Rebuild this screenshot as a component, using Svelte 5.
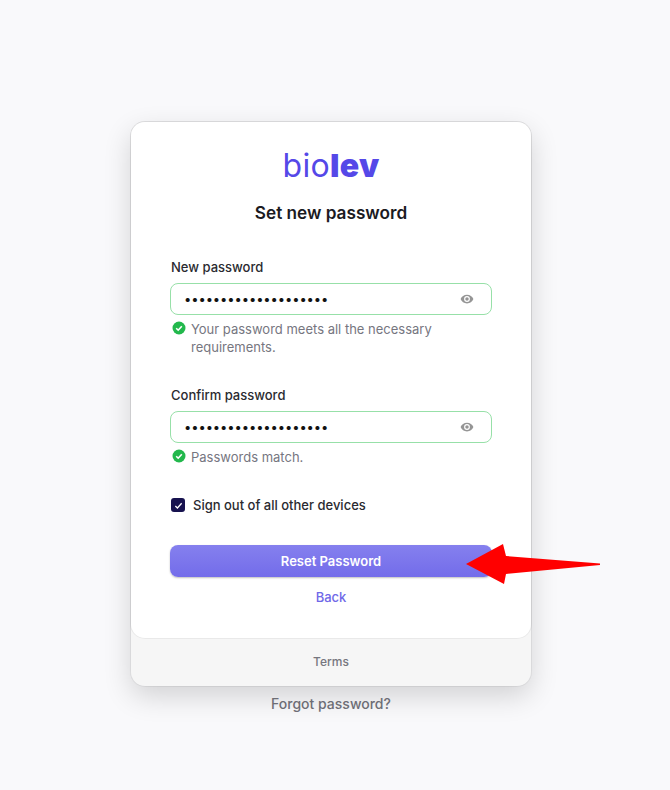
<script>
  const fields = [
    { label: 'New password', hint: 'Your password meets all the necessary requirements.' },
    { label: 'Confirm password', hint: 'Passwords match.' }
  ];
</script>

<div class="page">
  <div class="card">
    <div class="main">
      <div class="logo">bio<b>lev</b></div>
      <h1>Set new password</h1>

      {#each fields as field}
        <div class="field">
          <label for={field.label}>{field.label}</label>
          <div class="input-wrap">
            <input id={field.label} type="password" value="passwordpassword1234" readonly />
            <svg class="eye" width="14" height="14" viewBox="0 0 24 24" fill="#959595">
              <path d="M12 4.5C7 4.5 2.7 7.6 1 12c1.700 4.400 6 7.500 11 7.500s9.300-3.100 11-7.500c-1.700-4.400-6-7.500-11-7.500zM12 17a5 5 0 1 1 0-10 5 5 0 0 1 0 10zm0-8a3 3 0 1 0 0 6 3 3 0 0 0 0-6z" />
            </svg>
          </div>
          <div class="hint">
            <svg class="ok" width="14" height="14" viewBox="0 0 14 14">
              <circle cx="7" cy="7" r="6.500" fill="#22b84c" />
              <path d="M4.200 7.200l2 2 3.600-4" fill="none" stroke="#fff" stroke-width="1.600" />
            </svg>
            <span>{field.hint}</span>
          </div>
        </div>
      {/each}

      <div class="check">
        <span class="box">
          <svg width="9" height="9" viewBox="0 0 10 10">
            <path d="M1.500 5.500l2.300 2.300 4.700-5.300" fill="none" stroke="#fff" stroke-width="1.400" />
          </svg>
        </span>
        Sign out of all other devices
      </div>

      <button>Reset Password</button>
      <div class="back">Back</div>
    </div>
    <div class="footer">Terms</div>
  </div>
  <div class="forgot">Forgot password?</div>

  <svg class="arrow" width="140" height="44" viewBox="0 0 140 44">
    <path d="M1 22 L38 2 L41 14 L135 21.500 L135 23 L41 32 L39 42 Z" fill="#ff0000" />
  </svg>
</div>

<style>
  :global(body) {
    background: #f9f9fb;
    font-family: Inter, "Liberation Sans", sans-serif;
  }

  .page {
    position: relative;
    width: 670px;
    height: 790px;
    padding: 122px 8px 0 0;
    box-sizing: border-box;
    display: flex;
    flex-direction: column;
    align-items: center;
    overflow: hidden;
  }

  .card {
    width: 400px;
    background: #f6f6f6;
    border-radius: 14px;
    box-shadow: 0 0 0 1px rgba(0, 0, 0, 0.05), 0 10px 28px rgba(0, 0, 0, 0.16);
  }

  .main {
    height: 516px;
    box-sizing: border-box;
    padding: 24px 40px 0;
    background: #fff;
    border-radius: 14px;
    box-shadow: 0 0 0 1px rgba(0, 0, 0, 0.05);
    display: flex;
    flex-direction: column;
  }

  .logo {
    text-align: center;
    font-size: 32px;
    line-height: 40px;
    letter-spacing: 0.300px;
    font-weight: 400;
    color: #5548e8;
  }

  .logo b {
    font-weight: 900;
  }

  h1 {
    margin: 17px 0 0;
    text-align: center;
    font-size: 17.200px;
    line-height: 20px;
    font-weight: 600;
    color: #1b1b1f;
  }

  .field {
    margin-top: 34px;
  }

  .field + .field {
    margin-top: 29px;
  }

  label {
    display: block;
    font-size: 13px;
    line-height: 20px;
    font-weight: 500;
    color: #2a2a30;
  }

  .input-wrap {
    position: relative;
    margin: 6px -1px 0;
  }

  input {
    display: block;
    width: 100%;
    height: 32px;
    box-sizing: border-box;
    padding: 0 40px 0 13px;
    border: 1px solid #97e0a8;
    border-radius: 8px;
    outline: none;
    background: #fff;
    font-family: Inter, sans-serif;
    font-size: 13px;
    letter-spacing: -0.100px;
    color: #111;
  }

  .eye {
    position: absolute;
    right: 18px;
    top: 9px;
  }

  .hint {
    display: flex;
    gap: 5px;
    margin: 5px 0 0 1px;
    font-size: 13px;
    line-height: 18px;
    color: #76767f;
  }

  .ok {
    flex: none;
    margin-top: 1px;
  }

  .check {
    display: flex;
    align-items: center;
    gap: 8px;
    margin-top: 29px;
    font-size: 13px;
    line-height: 20px;
    font-weight: 500;
    color: #2a2a30;
  }

  .box {
    width: 14px;
    height: 14px;
    border-radius: 3px;
    background: #17124f;
    display: flex;
    align-items: center;
    justify-content: center;
  }

  button {
    margin: 30px -1px 0;
    height: 32px;
    border: none;
    border-radius: 8px;
    background: linear-gradient(#8580ee, #736cea);
    box-shadow: 0 1px 2px rgba(0, 0, 0, 0.25);
    color: #fff;
    font-family: inherit;
    font-size: 13px;
    font-weight: 600;
  }

  .back {
    margin-top: 10px;
    text-align: center;
    font-size: 13px;
    line-height: 20px;
    font-weight: 500;
    color: #6f68e8;
  }

  .footer {
    height: 46px;
    padding-bottom: 2px;
    display: flex;
    align-items: center;
    justify-content: center;
    font-size: 12px;
    font-weight: 500;
    color: #76767f;
  }

  .forgot {
    margin-top: 8px;
    font-size: 14px;
    line-height: 20px;
    font-weight: 500;
    color: #6d6d75;
  }

  .arrow {
    position: absolute;
    left: 465px;
    top: 542px;
  }
</style>
